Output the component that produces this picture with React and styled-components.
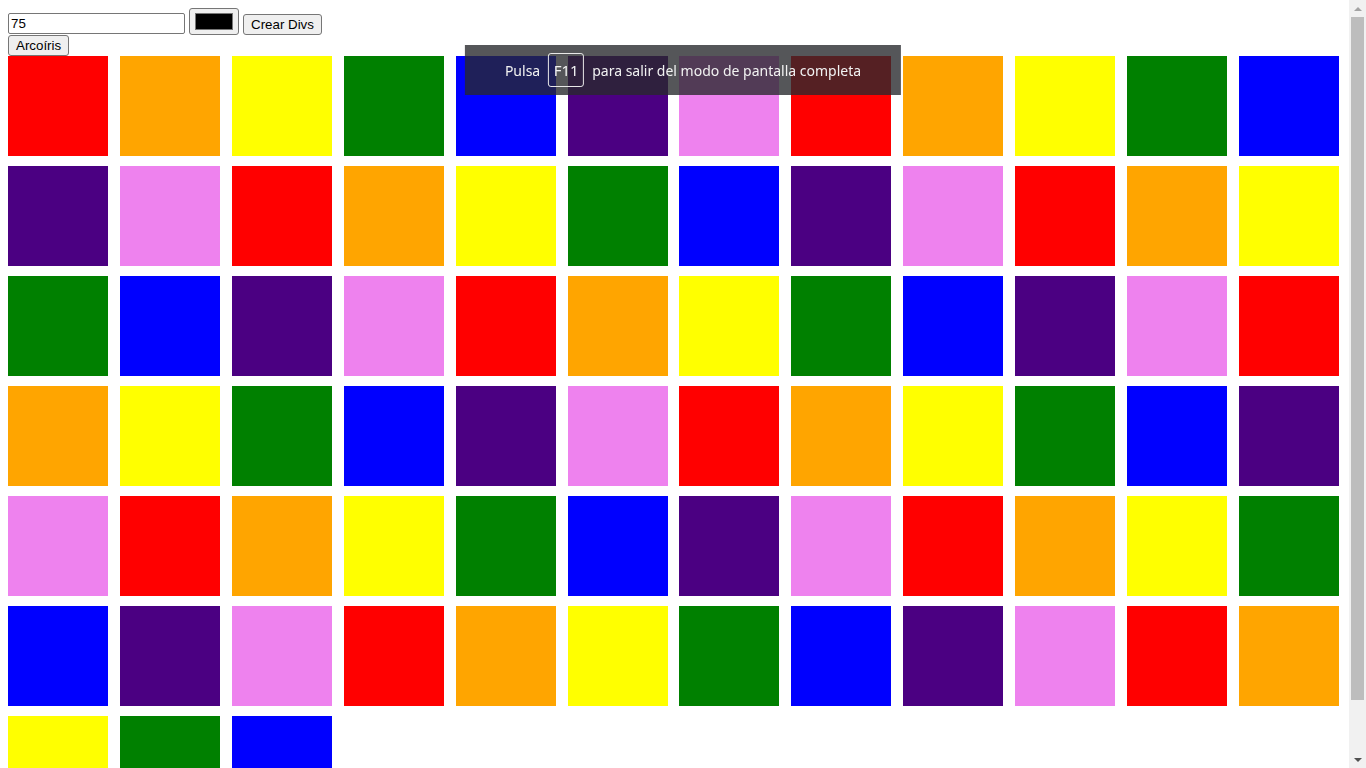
import React, { useState } from "react";
import styled, { createGlobalStyle } from "styled-components";

const colores = ["red", "orange", "yellow", "green", "blue", "indigo", "violet"];

const Global = createGlobalStyle`
  body {
    margin: 8px 25px 8px 8px;
    font-family: "Liberation Serif", serif;
    background: #fff;
  }
`;

const Controles = styled.div`
  display: flex;
  align-items: flex-end;
  gap: 4px;
  height: 27px;
`;

const Campo = styled.input`
  box-sizing: border-box;
  width: 177px;
  height: 21px;
  margin: 0 0 1px 0;
  padding: 1px 2px;
  border: 1px solid #767676;
  border-radius: 2px;
  font-family: "Liberation Sans", Arial, sans-serif;
  font-size: 13.33px;
  color: #000;
  outline: none;
`;

const Selector = styled.div`
  box-sizing: border-box;
  width: 50px;
  height: 27px;
  padding: 4px 5px;
  border: 1px solid #767676;
  border-radius: 3px;
  background: #efefef;
  div {
    width: 100%;
    height: 100%;
    border: 1px solid #777;
    box-sizing: border-box;
    background: ${(p) => p.$color};
  }
`;

const Boton = styled.button`
  box-sizing: border-box;
  height: 21px;
  padding: 1px 7px;
  margin: 0;
  border: 1px solid #767676;
  border-radius: 3px;
  background: #efefef;
  color: #000;
  font-family: "Liberation Sans", Arial, sans-serif;
  font-size: 13.33px;
  line-height: 17px;
  cursor: default;
`;

const Fila = styled.div`
  display: flex;
  height: 21px;
`;

const Rejilla = styled.div`
  display: flex;
  flex-wrap: wrap;
  column-gap: 11.92px;
  row-gap: 10px;
`;

const Cuadro = styled.div`
  width: 100px;
  height: 100px;
  background: ${(p) => p.$color};
`;

const Aviso = styled.div`
  position: fixed;
  top: 45px;
  left: 50%;
  transform: translateX(-50%);
  height: 50px;
  padding: 0 40px;
  box-sizing: border-box;
  display: flex;
  align-items: center;
  gap: 8px;
  background: rgba(39, 41, 44, 0.79);
  color: #f2f2f2;
  font-family: "Noto Sans", "Open Sans", sans-serif;
  font-size: 14px;
  white-space: nowrap;
`;

const Tecla = styled.span`
  display: inline-flex;
  align-items: center;
  justify-content: center;
  width: 36px;
  height: 34px;
  box-sizing: border-box;
  border: 1px solid #e8e8e8;
  border-radius: 3px;
  font-size: 15px;
`;

const Barra = styled.div`
  position: fixed;
  top: 0;
  right: 0;
  width: 17px;
  height: 100vh;
  background: #f1f1f1;
  display: flex;
  flex-direction: column;
  align-items: center;
`;

const Flecha = styled.div`
  height: 17px;
  flex: none;
  display: flex;
  align-items: center;
  justify-content: center;
  &::before {
    content: "";
    border-left: 4px solid transparent;
    border-right: 4px solid transparent;
    ${(p) =>
      p.$abajo
        ? "border-top: 4px solid #505050;"
        : "border-bottom: 4px solid #a3a3a3;"}
  }
`;

const Pulgar = styled.div`
  width: 13px;
  height: 683px;
  background: #bdbdbd;
  flex: none;
`;

const Hueco = styled.div`
  flex: 1;
`;

export default function App() {
  const [cantidad, setCantidad] = useState("75");
  const total = parseInt(cantidad, 10) || 0;
  return (
    <>
      <Global />
      <Controles>
        <Campo value={cantidad} onChange={(e) => setCantidad(e.target.value)} />
        <Selector $color="#000">
          <div />
        </Selector>
        <Boton>Crear Divs</Boton>
      </Controles>
      <Fila>
        <Boton>Arcoíris</Boton>
      </Fila>
      <Rejilla>
        {Array.from({ length: total }, (_, i) => (
          <Cuadro key={i} $color={colores[i % colores.length]} />
        ))}
      </Rejilla>
      <Barra>
        <Flecha />
        <Pulgar />
        <Hueco />
        <Flecha $abajo />
      </Barra>
      <Aviso>
        Pulsa <Tecla>F11</Tecla> para salir del modo de pantalla completa
      </Aviso>
    </>
  );
}
